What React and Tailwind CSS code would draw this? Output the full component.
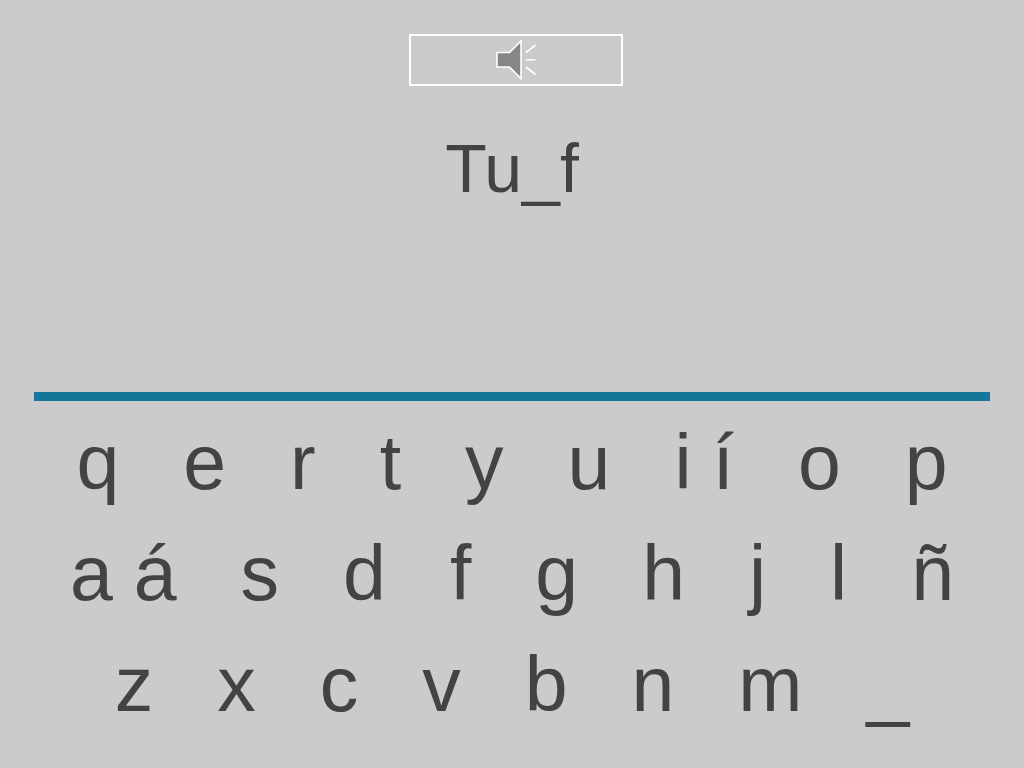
import React, { useState } from 'react';

// letters in the same group sit closer together
const KEY_ROWS = [
  [['q'], ['e'], ['r'], ['t'], ['y'], ['u'], ['i', 'í'], ['o'], ['p']],
  [['a', 'á'], ['s'], ['d'], ['f'], ['g'], ['h'], ['j'], ['l'], ['ñ']],
  [['z'], ['x'], ['c'], ['v'], ['b'], ['n'], ['m'], ['_']],
];

const SpeakerIcon = () => (
  <svg width="42" height="44" viewBox="0 0 42 44" fill="none" stroke="#ffffff" strokeWidth="1.6" aria-hidden="true">
    <path d="M2 14.5 H14.5 L26 3 V40.5 L14.5 29 H2 Z" fill="#868686" />
    <path d="M31 14.5 L40.5 7 M31 21.7 H40.5 M31 29 L40.5 36.5" />
  </svg>
);

const Key = ({ letter, onPress }) => (
  <button type="button" onClick={() => onPress(letter)} className="cursor-pointer hover:text-[#147799]">
    {letter}
  </button>
);

const App = () => {
  const [answer, setAnswer] = useState(null);

  return (
    <main className="min-h-screen bg-[#cbcbcb] text-[#434343] font-['Liberation_Sans',Arial,sans-serif] px-[34px] pt-[34px]">
      <div className="flex justify-center pl-2">
        <button
          type="button"
          aria-label="Play sound"
          className="flex items-center justify-center w-[214px] h-[52px] border-2 border-white cursor-pointer"
        >
          <SpeakerIcon />
        </button>
      </div>

      <h1 className="mt-[42px] text-center text-[68px] leading-[80px]">
        Tu{answer || '_'}f
      </h1>

      <hr className="mt-[184px] border-0 h-[9px] bg-[#147799]" />

      {/* Keyboard */}
      <div className="mt-[6px] text-[77px] leading-[111px]">
        {KEY_ROWS.map((row, i) => (
          <div key={i} className="flex justify-center gap-16">
            {row.map((group) => (
              <div key={group[0]} className="flex gap-[21px]">
                {group.map((letter) => (
                  <Key key={letter} letter={letter} onPress={setAnswer} />
                ))}
              </div>
            ))}
          </div>
        ))}
      </div>
    </main>
  );
};

export default App;
